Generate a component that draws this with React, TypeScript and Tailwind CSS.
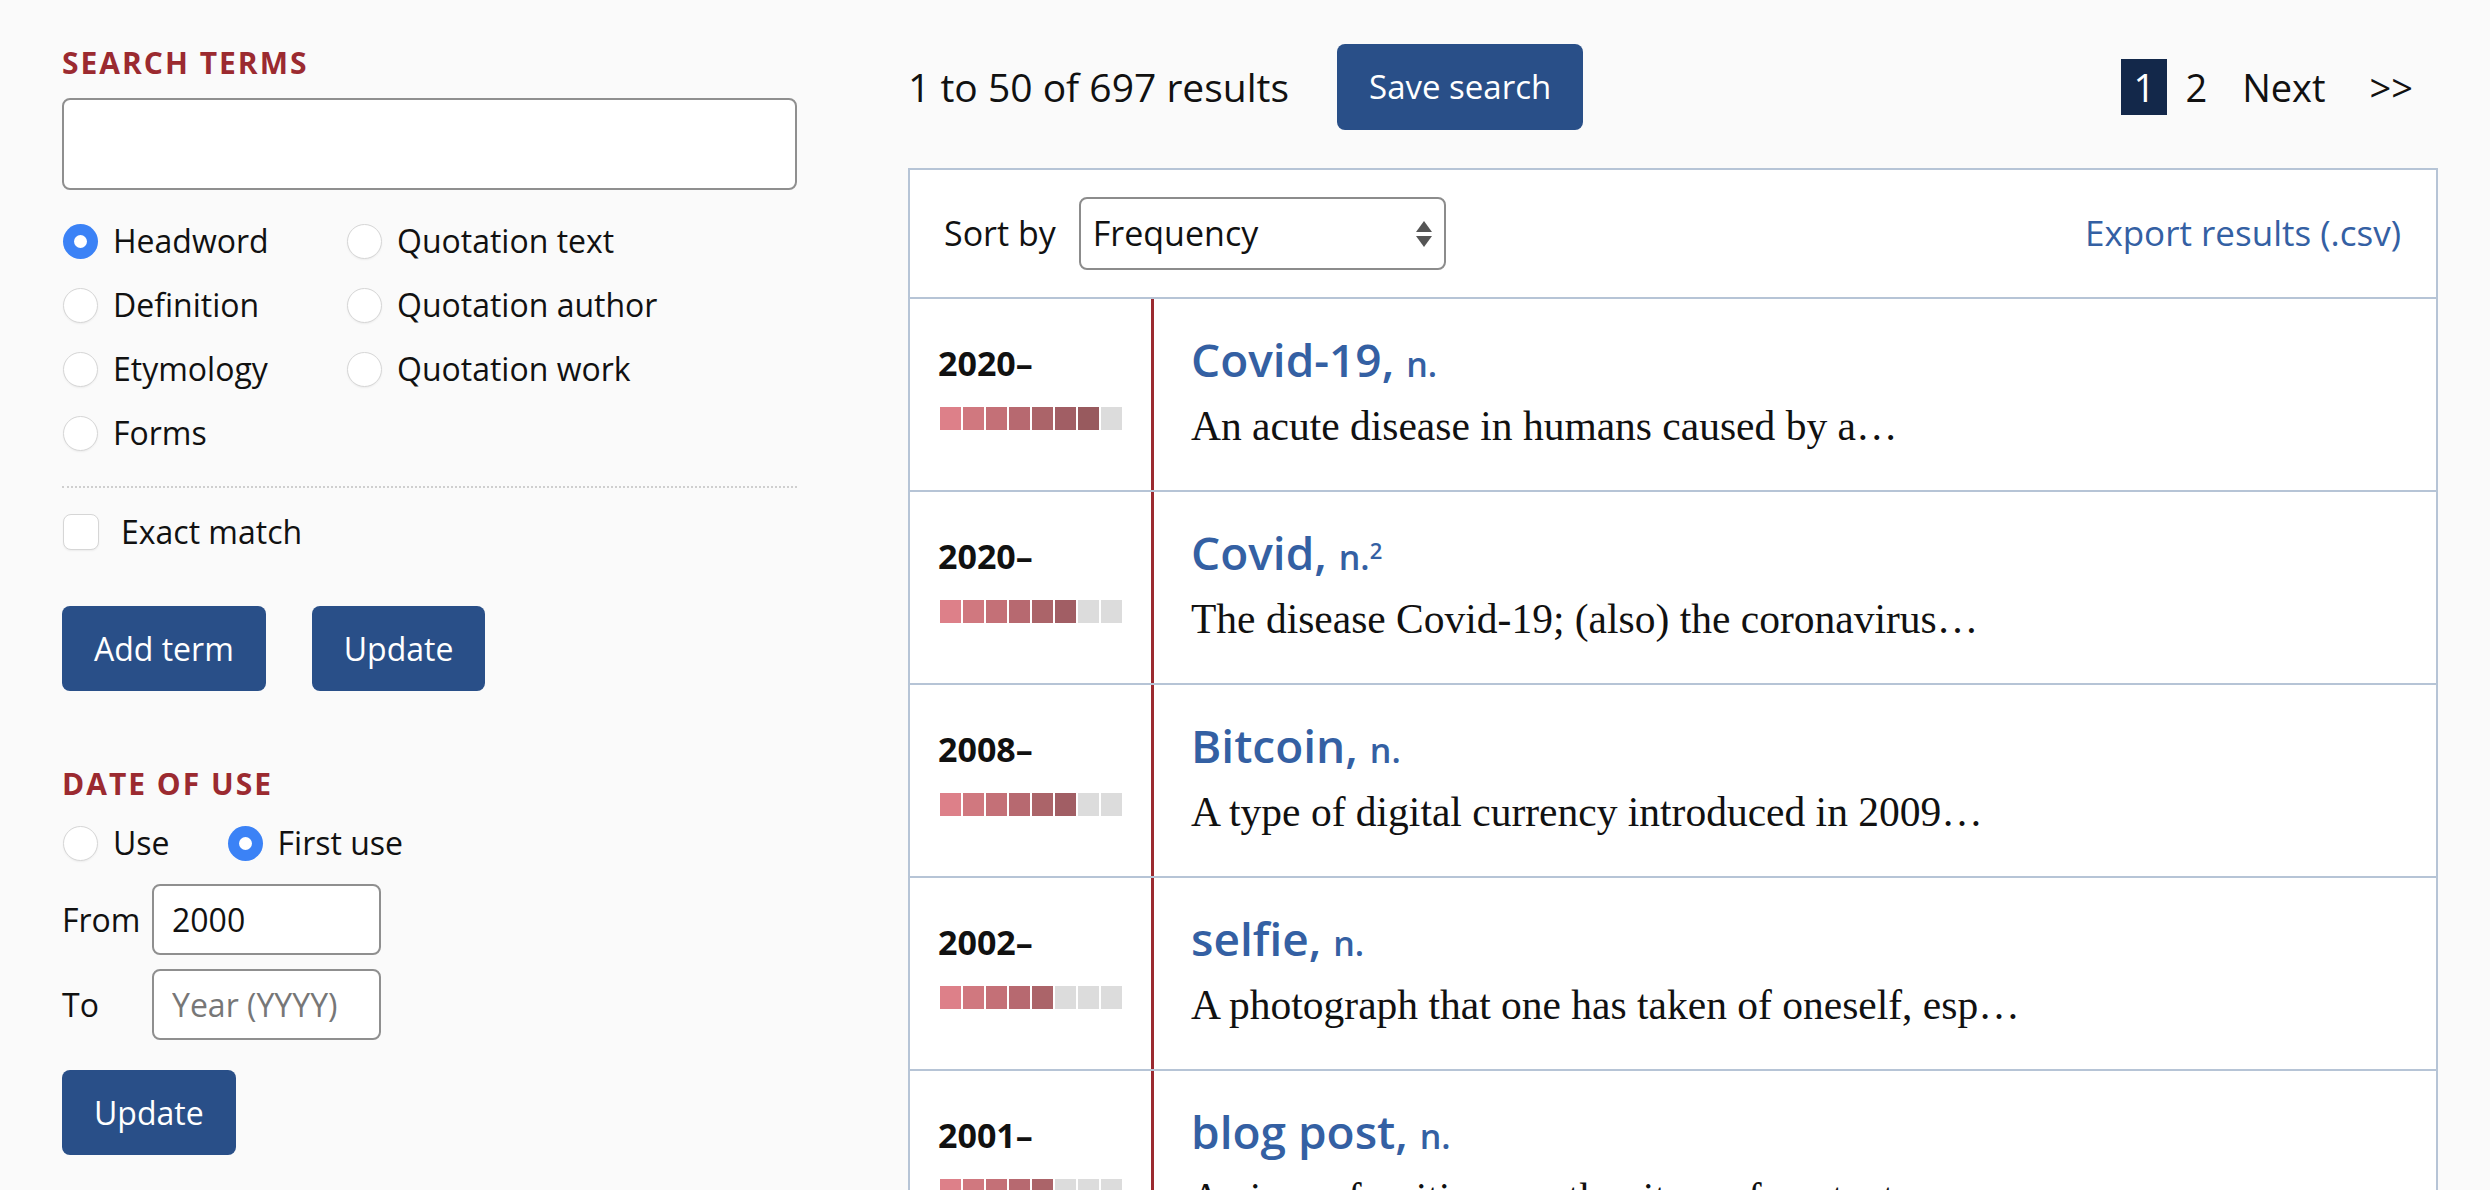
import React from 'react';

type Result = {
  year: string;
  word: string;
  sup?: string;
  def: string;
  level: number;
};

const results: Result[] = [
  { year: '2020–', word: 'Covid-19,', def: 'An acute disease in humans caused by a…', level: 7 },
  { year: '2020–', word: 'Covid,', sup: '2', def: 'The disease Covid-19; (also) the coronavirus…', level: 6 },
  { year: '2008–', word: 'Bitcoin,', def: 'A type of digital currency introduced in 2009…', level: 6 },
  { year: '2002–', word: 'selfie,', def: 'A photograph that one has taken of oneself, esp…', level: 5 },
  { year: '2001–', word: 'blog post,', def: 'A piece of writing or other item of content…', level: 5 },
];

const barColors = ['#dd8089', '#d0787f', '#c47077', '#b76970', '#ab6469', '#a15e64', '#985a5e', '#955a5e'];

const Radio = ({ checked }: { checked?: boolean }) =>
  checked ? (
    <span className="flex h-[35px] w-[35px] shrink-0 items-center justify-center rounded-full bg-[#3b82f6]">
      <span className="h-[13px] w-[13px] rounded-full bg-white" />
    </span>
  ) : (
    <span className="h-[35px] w-[35px] shrink-0 rounded-full border border-[#d6d6d6] bg-white shadow-[0_1px_2px_rgba(0,0,0,0.06)]" />
  );

const RadioOption = ({ label, checked }: { label: string; checked?: boolean }) => (
  <label className="flex h-[48px] items-center gap-[15px]">
    <Radio checked={checked} />
    <span>{label}</span>
  </label>
);

const Heading = ({ children, className = '' }: { children: React.ReactNode; className?: string }) => (
  <h2 className={`text-[30px] leading-[36px] font-bold tracking-[2px] text-[#9b2a30] ${className}`}>{children}</h2>
);

const Button = ({ children }: { children: React.ReactNode }) => (
  <button className="h-[85px] rounded-[8px] bg-[#294f88] px-[32px] text-[32px] text-white">{children}</button>
);

const FrequencyBar = ({ level }: { level: number }) => (
  <div className="mt-[24px] ml-[2px] flex gap-[2px]">
    {barColors.map((c, i) => (
      <span key={i} className="h-[23px] w-[21px]" style={{ backgroundColor: i < level ? c : '#dcdcdc' }} />
    ))}
  </div>
);

export default function App() {
  return (
    <div className="flex min-h-screen bg-[#fafafa] pt-[44px] pl-[62px] font-['Open_Sans',sans-serif] text-[#111]">
      <aside className="w-[735px] shrink-0 text-[32px]">
        <Heading className="mt-[1px]">SEARCH TERMS</Heading>
        <input
          type="text"
          className="mt-[17px] block h-[92px] w-full rounded-[8px] border-2 border-[#8f8f8f] bg-white px-4 text-[32px] outline-none"
        />

        <div className="mt-[27px] grid grid-cols-[284px_1fr] gap-y-[16px] pl-[1px]">
          <RadioOption label="Headword" checked />
          <RadioOption label="Quotation text" />
          <RadioOption label="Definition" />
          <RadioOption label="Quotation author" />
          <RadioOption label="Etymology" />
          <RadioOption label="Quotation work" />
          <RadioOption label="Forms" />
        </div>

        <div className="mt-[29px] border-t-2 border-dotted border-[#cfcfcf]" />

        <label className="mt-[20px] flex h-[48px] items-center gap-[22px] pl-[1px]">
          <span className="h-[36px] w-[36px] rounded-[8px] border border-[#d6d6d6] bg-white shadow-[0_1px_2px_rgba(0,0,0,0.06)]" />
          <span>Exact match</span>
        </label>

        <div className="mt-[50px] flex gap-[46px]">
          <Button>Add term</Button>
          <Button>Update</Button>
        </div>

        <Heading className="mt-[75px]">DATE OF USE</Heading>
        <div className="mt-[17px] flex items-center gap-[58px] pl-[1px]">
          <RadioOption label="Use" />
          <RadioOption label="First use" checked />
        </div>

        <div className="mt-[17px] flex items-center">
          <span className="w-[90px]">From</span>
          <input
            type="text"
            defaultValue="2000"
            className="h-[71px] w-[229px] rounded-[8px] border-2 border-[#8f8f8f] bg-white px-[18px] text-[32px] outline-none"
          />
        </div>
        <div className="mt-[14px] flex items-center">
          <span className="w-[90px]">To</span>
          <input
            type="text"
            placeholder="Year (YYYY)"
            className="h-[71px] w-[229px] rounded-[8px] border-2 border-[#8f8f8f] bg-white px-[18px] text-[32px] outline-none placeholder:text-[#777]"
          />
        </div>

        <div className="mt-[30px]">
          <Button>Update</Button>
        </div>
      </aside>

      <main className="ml-[111px] w-[1530px] shrink-0">
        <div className="flex h-[86px] items-center">
          <span className="text-[39px]">1 to 50 of 697 results</span>
          <button className="ml-[48px] h-[86px] rounded-[8px] bg-[#294f88] px-[32px] text-[33px] text-white">
            Save search
          </button>
          <nav className="mr-[25px] ml-auto flex items-center text-[38px]">
            <span className="flex h-[56px] w-[46px] items-center justify-center bg-[#13284a] text-white">1</span>
            <a className="ml-[18px]">2</a>
            <a className="ml-[35px]">Next</a>
            <a className="ml-[44px]">&gt;&gt;</a>
          </nav>
        </div>

        <div className="mt-[38px] border-2 border-[#b6c4d6] bg-white">
          <div className="flex h-[129px] items-center border-b-2 border-[#b6c4d6] pr-[35px] pl-[34px] text-[34px]">
            <span>Sort by</span>
            <div className="relative ml-[23px]">
              <select className="block h-[73px] w-[367px] appearance-none rounded-[8px] border-2 border-[#8c8c8c] bg-white pl-[12px] text-[34px] outline-none">
                <option>Frequency</option>
                <option>Date</option>
                <option>Alphabetical</option>
              </select>
              <svg
                className="pointer-events-none absolute top-[24px] right-[14px]"
                width="16"
                height="26"
                viewBox="0 0 16 26"
              >
                <polygon points="8,0 16,11 0,11" fill="#555" />
                <polygon points="0,15 16,15 8,26" fill="#555" />
              </svg>
            </div>
            <a className="ml-auto text-[35px] text-[#3460a3]">Export results (.csv)</a>
          </div>

          {results.map((r) => (
            <div key={r.word} className="flex h-[193px] border-b-2 border-[#b6c4d6]">
              <div className="w-[241px] shrink-0 pt-[44px] pl-[28px]">
                <div className="text-[34px] leading-[40px] font-bold">{r.year}</div>
                <FrequencyBar level={r.level} />
              </div>
              <div className="flex-1 border-l-[3px] border-[#9b2a30] pt-[32px] pl-[37px]">
                <div className="text-[46px] leading-[56px] font-semibold text-[#3460a3]">
                  {r.word}{' '}
                  <span className="text-[34px]">
                    n.{r.sup && <sup className="text-[22px]">{r.sup}</sup>}
                  </span>
                </div>
                <div className="mt-[6px] font-['Liberation_Serif',serif] text-[41.5px] leading-[56px]">{r.def}</div>
              </div>
            </div>
          ))}
        </div>
      </main>
    </div>
  );
}
